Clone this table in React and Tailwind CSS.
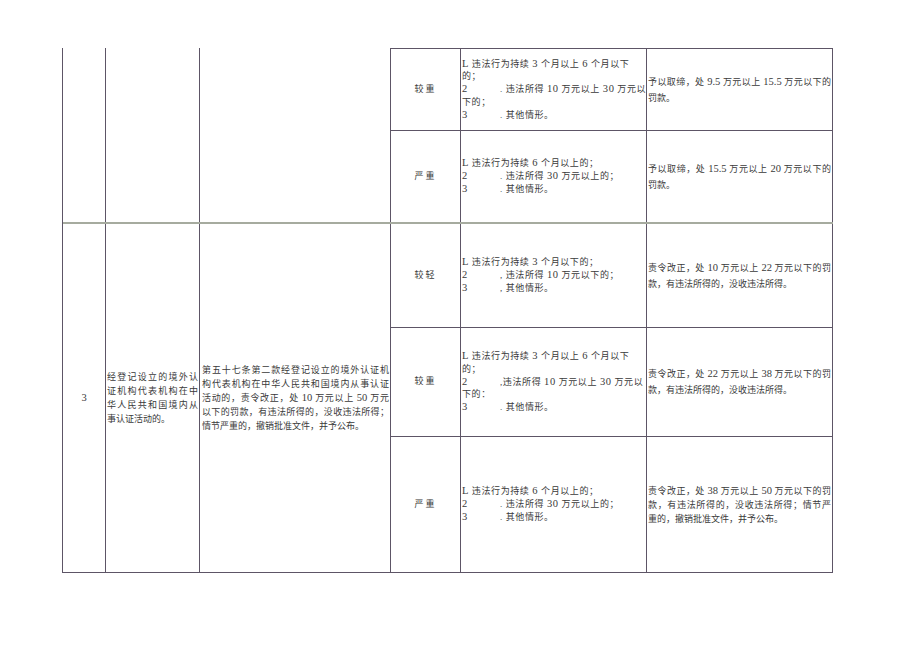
import React from 'react';

const font = 'font-["Liberation_Serif","Noto_Sans_CJK_SC",serif]';
const line = 'border-[#5d5566]';

// Latin letters and numbers are set a little larger than the CJK text
const T = ({ s }) =>
    s.split(/([0-9.L]+(?:[0-9.]*))/).map((part, i) =>
        /^[0-9.L]+$/.test(part) && part !== '.' ? (
            <span key={i} className="text-[10.5px]">{part}</span>
        ) : (
            <React.Fragment key={i}>{part}</React.Fragment>
        )
    );

// Numbered item: number, tab gap, then text
const Item = ({ n, s }) => (
    <div className="whitespace-nowrap">
        <span className="inline-block w-[38px] text-[10.5px]">{n}</span>
        <T s={s} />
    </div>
);

const Plain = ({ s }) => (
    <div className="whitespace-nowrap">
        <T s={s} />
    </div>
);

// justified line (all but the last of a paragraph)
const J = ({ s }) => (
    <div className="whitespace-nowrap text-justify [text-align-last:justify]">
        <T s={s} />
    </div>
);

const SubRow = ({ label, height, last, conditions, penalty, penaltyLeading = 'leading-[16px]' }) => (
    <div className={`flex ${height} ${last ? '' : `border-b ${line}`}`}>
        <div className={`w-[70px] shrink-0 border-r ${line} flex items-center justify-center tracking-[2px]`}>
            {label}
        </div>
        <div className={`w-[186px] shrink-0 border-r ${line} flex items-center pl-[1px] leading-[12.7px] tracking-[0.6px]`}>
            <div className="w-full">{conditions}</div>
        </div>
        <div className={`w-[186px] shrink-0 border-r ${line} flex items-center pl-[1px] pr-[1px] ${penaltyLeading}`}>
            <div className="w-full">{penalty}</div>
        </div>
    </div>
);

export default function App() {
    return (
        <div className={`w-[920px] h-[651px] bg-white pl-[62px] pt-[48px] text-[9px] text-[#3a3a3a] ${font}`}>
            <div className={`w-[771px] border-l ${line}`}>
                {/* Row carried over from the previous page */}
                <div className="flex border-b-2 border-[#a6ab9f]">
                    <div className={`w-[43px] shrink-0 border-r ${line}`}></div>
                    <div className={`w-[94px] shrink-0 border-r ${line}`}></div>
                    <div className={`w-[191px] shrink-0 border-r ${line}`}></div>
                    <div className={`flex flex-col border-t ${line}`}>
                        <SubRow
                            label="较重"
                            height="h-[82px]"
                            conditions={
                                <>
                                    <Plain s="L 违法行为持续 3 个月以上 6 个月以下" />
                                    <Plain s="的；" />
                                    <Item n="2" s=". 违法所得 10 万元以上 30 万元以" />
                                    <Plain s="下的；" />
                                    <Item n="3" s=". 其他情形。" />
                                </>
                            }
                            penalty={
                                <>
                                    <J s="予以取缔，处 9.5 万元以上 15.5 万元以下的" />
                                    <Plain s="罚款。" />
                                </>
                            }
                        />
                        <SubRow
                            label="严重"
                            height="h-[91px]"
                            last
                            conditions={
                                <>
                                    <Plain s="L 违法行为持续 6 个月以上的；" />
                                    <Item n="2" s=". 违法所得 30 万元以上的；" />
                                    <Item n="3" s=". 其他情形。" />
                                </>
                            }
                            penalty={
                                <>
                                    <J s="予以取缔，处 15.5 万元以上 20 万元以下的" />
                                    <Plain s="罚款。" />
                                </>
                            }
                        />
                    </div>
                </div>

                {/* Item 3 */}
                <div className={`flex border-b ${line}`}>
                    <div className={`w-[43px] shrink-0 border-r ${line} flex items-center justify-center text-[10.5px]`}>3</div>
                    <div className={`w-[94px] shrink-0 border-r ${line} flex items-center pl-[1px] pr-[1px] leading-[14px]`}>
                        <div className="w-full">
                            <J s="经登记设立的境外认" />
                            <J s="证机构代表机构在中" />
                            <J s="华人民共和国境内从" />
                            <Plain s="事认证活动的。" />
                        </div>
                    </div>
                    <div className={`w-[191px] shrink-0 border-r ${line} flex items-center pl-[2px] pr-[1px] leading-[14px]`}>
                        <div className="w-full">
                            <J s="第五十七条第二款经登记设立的境外认证机" />
                            <J s="构代表机构在中华人民共和国境内从事认证" />
                            <J s="活动的，责令改正，处 10 万元以上 50 万元" />
                            <J s="以下的罚款，有违法所得的，没收违法所得；" />
                            <Plain s="情节严重的，撤销批准文件，并予公布。" />
                        </div>
                    </div>
                    <div className="flex flex-col">
                        <SubRow
                            label="较轻"
                            height="h-[104px]"
                            conditions={
                                <>
                                    <Plain s="L 违法行为持续 3 个月以下的；" />
                                    <Item n="2" s=", 违法所得 10 万元以下的；" />
                                    <Item n="3" s=", 其他情形。" />
                                </>
                            }
                            penalty={
                                <>
                                    <J s="责令改正，处 10 万元以上 22 万元以下的罚" />
                                    <Plain s="款，有违法所得的，没收违法所得。" />
                                </>
                            }
                        />
                        <SubRow
                            label="较重"
                            height="h-[109px]"
                            conditions={
                                <>
                                    <Plain s="L 违法行为持续 3 个月以上 6 个月以下" />
                                    <Plain s="的；" />
                                    <Item n="2" s=",违法所得 10 万元以上 30 万元以" />
                                    <Plain s="下的：" />
                                    <Item n="3" s=". 其他情形。" />
                                </>
                            }
                            penalty={
                                <>
                                    <J s="责令改正，处 22 万元以上 38 万元以下的罚" />
                                    <Plain s="款，有违法所得的，没收违法所得。" />
                                </>
                            }
                        />
                        <SubRow
                            label="严重"
                            height="h-[135px]"
                            last
                            penaltyLeading="leading-[14px]"
                            conditions={
                                <>
                                    <Plain s="L 违法行为持续 6 个月以上的；" />
                                    <Item n="2" s=". 违法所得 30 万元以上的；" />
                                    <Item n="3" s=". 其他情形。" />
                                </>
                            }
                            penalty={
                                <>
                                    <J s="责令改正，处 38 万元以上 50 万元以下的罚" />
                                    <J s="款，有违法所得的，没收违法所得；情节严" />
                                    <Plain s="重的，撤销批准文件，并予公布。" />
                                </>
                            }
                        />
                    </div>
                </div>
            </div>
        </div>
    );
}
